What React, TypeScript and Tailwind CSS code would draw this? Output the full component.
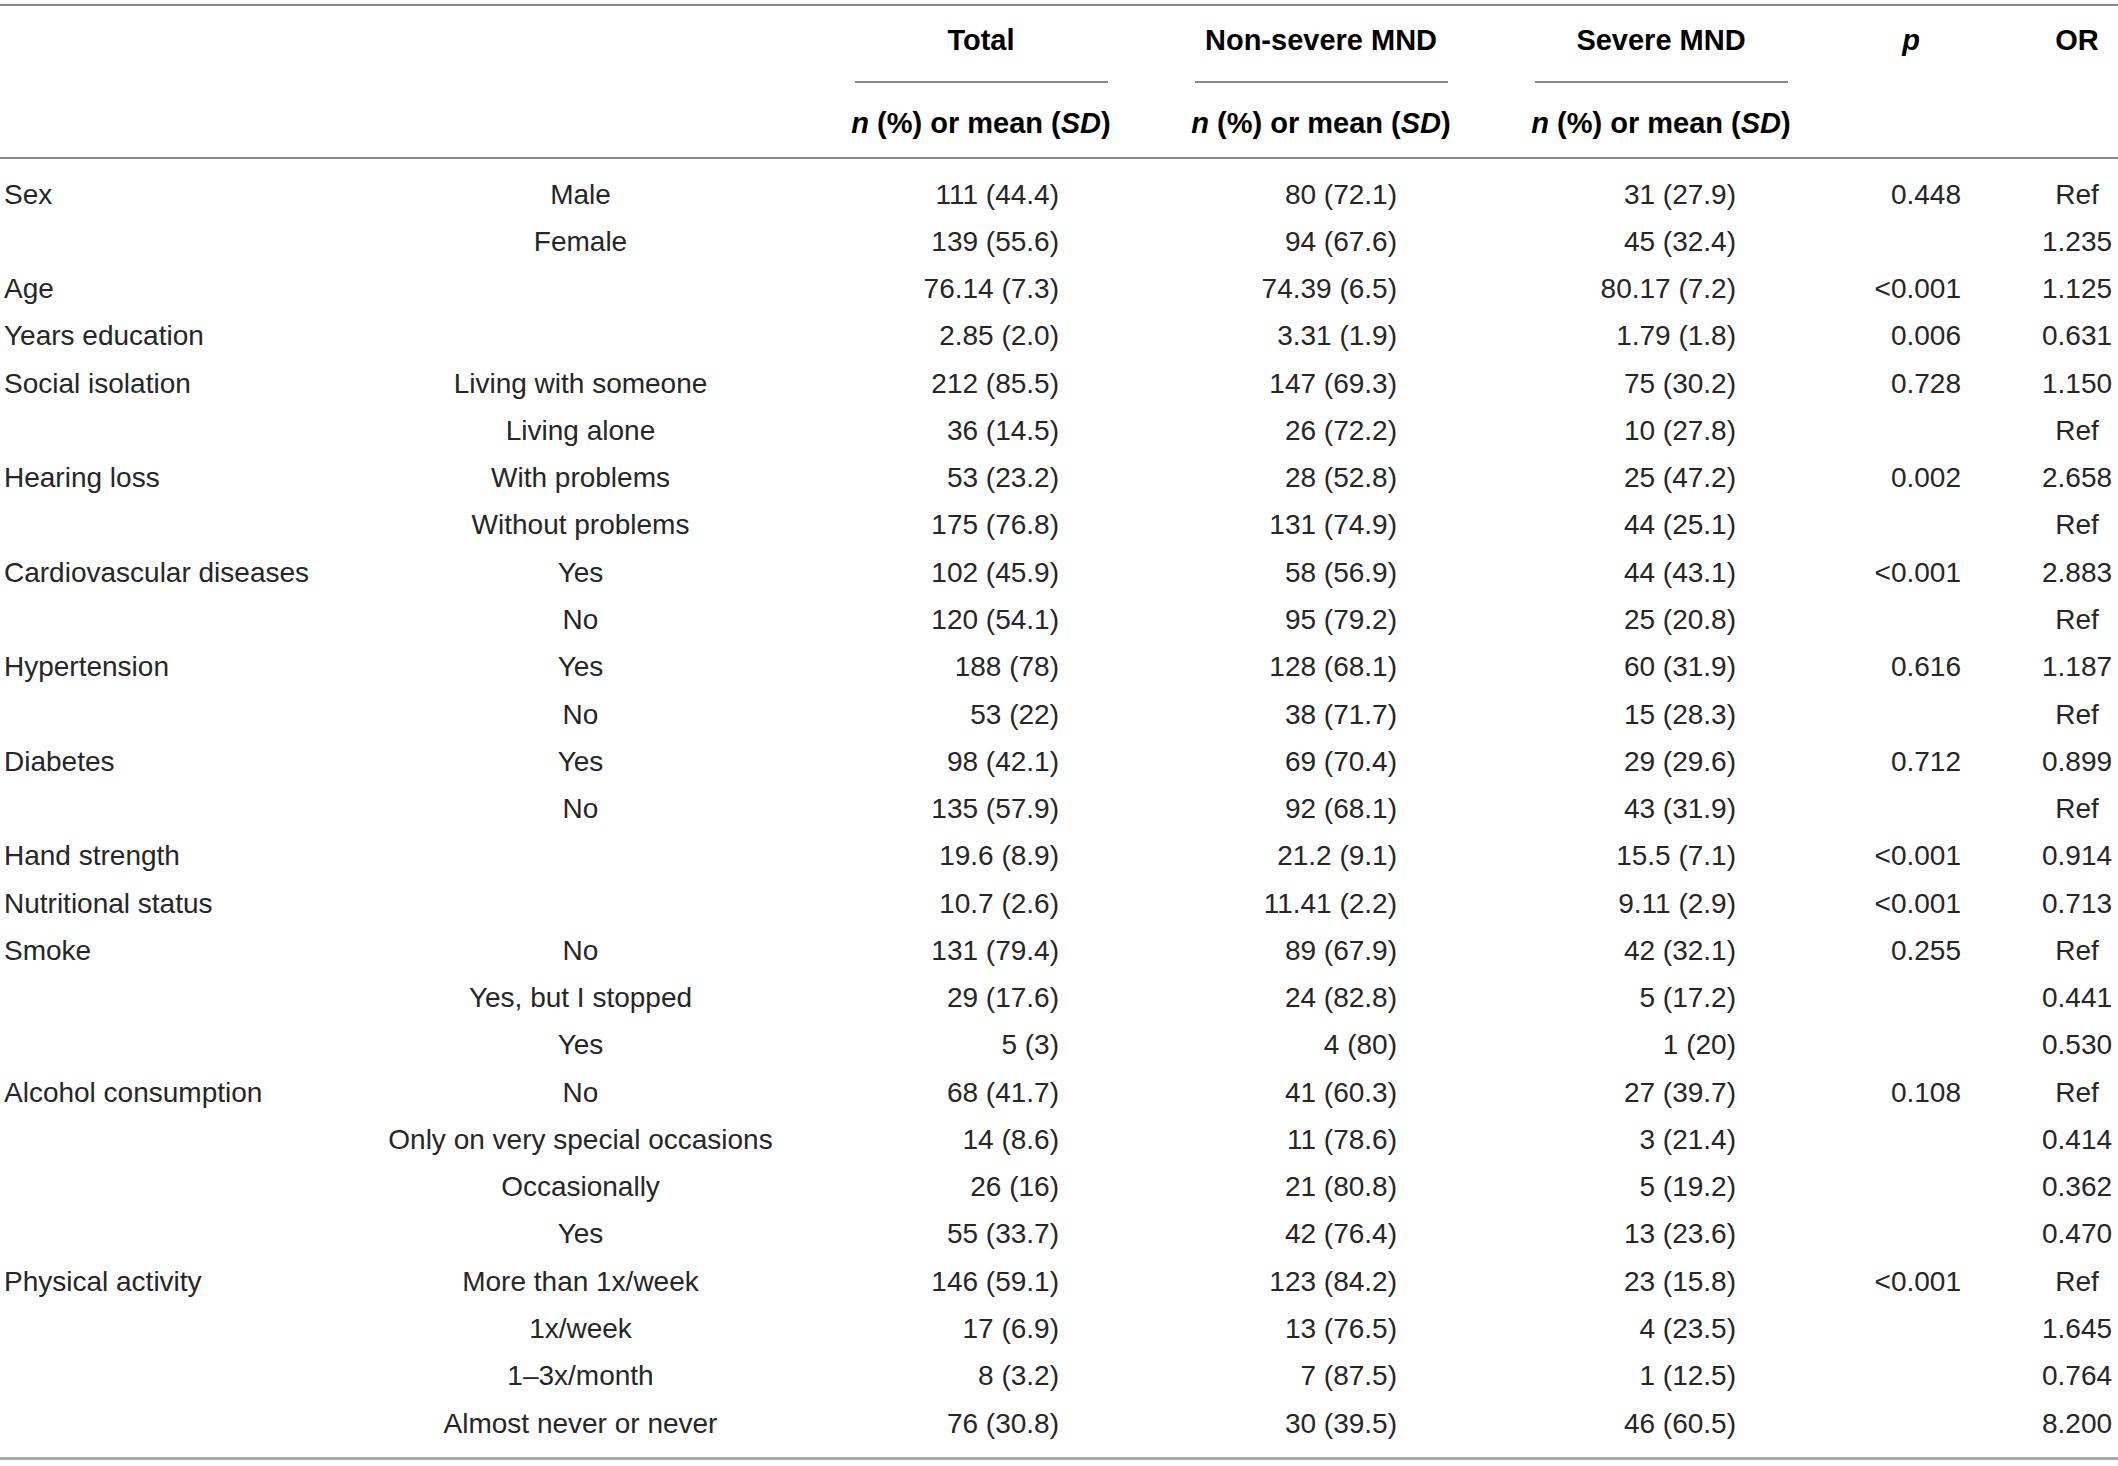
type Row = [string, string, string, string, string, string, string];

const ROWS: Row[] = [
  ['Sex', 'Male', '111 (44.4)', '80 (72.1)', '31 (27.9)', '0.448', 'Ref'],
  ['', 'Female', '139 (55.6)', '94 (67.6)', '45 (32.4)', '', '1.235'],
  ['Age', '', '76.14 (7.3)', '74.39 (6.5)', '80.17 (7.2)', '<0.001', '1.125'],
  ['Years education', '', '2.85 (2.0)', '3.31 (1.9)', '1.79 (1.8)', '0.006', '0.631'],
  ['Social isolation', 'Living with someone', '212 (85.5)', '147 (69.3)', '75 (30.2)', '0.728', '1.150'],
  ['', 'Living alone', '36 (14.5)', '26 (72.2)', '10 (27.8)', '', 'Ref'],
  ['Hearing loss', 'With problems', '53 (23.2)', '28 (52.8)', '25 (47.2)', '0.002', '2.658'],
  ['', 'Without problems', '175 (76.8)', '131 (74.9)', '44 (25.1)', '', 'Ref'],
  ['Cardiovascular diseases', 'Yes', '102 (45.9)', '58 (56.9)', '44 (43.1)', '<0.001', '2.883'],
  ['', 'No', '120 (54.1)', '95 (79.2)', '25 (20.8)', '', 'Ref'],
  ['Hypertension', 'Yes', '188 (78)', '128 (68.1)', '60 (31.9)', '0.616', '1.187'],
  ['', 'No', '53 (22)', '38 (71.7)', '15 (28.3)', '', 'Ref'],
  ['Diabetes', 'Yes', '98 (42.1)', '69 (70.4)', '29 (29.6)', '0.712', '0.899'],
  ['', 'No', '135 (57.9)', '92 (68.1)', '43 (31.9)', '', 'Ref'],
  ['Hand strength', '', '19.6 (8.9)', '21.2 (9.1)', '15.5 (7.1)', '<0.001', '0.914'],
  ['Nutritional status', '', '10.7 (2.6)', '11.41 (2.2)', '9.11 (2.9)', '<0.001', '0.713'],
  ['Smoke', 'No', '131 (79.4)', '89 (67.9)', '42 (32.1)', '0.255', 'Ref'],
  ['', 'Yes, but I stopped', '29 (17.6)', '24 (82.8)', '5 (17.2)', '', '0.441'],
  ['', 'Yes', '5 (3)', '4 (80)', '1 (20)', '', '0.530'],
  ['Alcohol consumption', 'No', '68 (41.7)', '41 (60.3)', '27 (39.7)', '0.108', 'Ref'],
  ['', 'Only on very special occasions', '14 (8.6)', '11 (78.6)', '3 (21.4)', '', '0.414'],
  ['', 'Occasionally', '26 (16)', '21 (80.8)', '5 (19.2)', '', '0.362'],
  ['', 'Yes', '55 (33.7)', '42 (76.4)', '13 (23.6)', '', '0.470'],
  ['Physical activity', 'More than 1x/week', '146 (59.1)', '123 (84.2)', '23 (15.8)', '<0.001', 'Ref'],
  ['', '1x/week', '17 (6.9)', '13 (76.5)', '4 (23.5)', '', '1.645'],
  ['', '1–3x/month', '8 (3.2)', '7 (87.5)', '1 (12.5)', '', '0.764'],
  ['', 'Almost never or never', '76 (30.8)', '30 (39.5)', '46 (60.5)', '', '8.200'],
];

const COLS = 'grid grid-cols-[350px_461px_340px_340px_340px_169px_118px]';

function GroupHead({ title }: { title: string }) {
  return (
    <div className="flex flex-col items-center">
      <div className="h-[68px] pt-[2px] flex items-center justify-center">{title}</div>
      <div className="mt-[7px] h-[2px] w-[253px] bg-[#8a8a8a]" />
      <div className="h-[74px] pt-[8px] flex items-center justify-center">
        <span>
          <i>n</i> (%) or mean (<i>SD</i>)
        </span>
      </div>
    </div>
  );
}

export default function App() {
  return (
    <div className="w-[2118px] h-[1466px] bg-white text-[#262626] font-['Liberation_Sans',Arial,sans-serif] text-[28px] overflow-hidden">
      <div className="pt-[4px]">
        <div className="h-[2px] bg-[#8a8a8a]" />
      </div>

      <div className={`${COLS} h-[151px] font-bold text-[29px] text-black`}>
        <div />
        <div />
        <GroupHead title="Total" />
        <GroupHead title="Non-severe MND" />
        <GroupHead title="Severe MND" />
        <div className="h-[68px] pt-[2px] flex items-center justify-center pr-[9px]">
          <i>p</i>
        </div>
        <div className="h-[68px] pt-[2px] flex items-center justify-center pl-[36px]">OR</div>
      </div>
      <div className="h-[2px] bg-[#8a8a8a]" />

      <div className="pt-[12px]">
        {ROWS.map((r, i) => (
          <div key={i} className={`${COLS} h-[47.28px] items-center whitespace-nowrap`}>
            <div className="pl-[4px]">{r[0]}</div>
            <div className="text-center">{r[1]}</div>
            <div className="text-right pr-[92px]">{r[2]}</div>
            <div className="text-right pr-[94px]">{r[3]}</div>
            <div className="text-right pr-[95px]">{r[4]}</div>
            <div className="text-right pr-[39px]">{r[5]}</div>
            <div className="text-center pl-[36px]">{r[6]}</div>
          </div>
        ))}
      </div>

      <div className="mt-[10px] h-[3px] bg-[#a9a9a9]" />
    </div>
  );
}
